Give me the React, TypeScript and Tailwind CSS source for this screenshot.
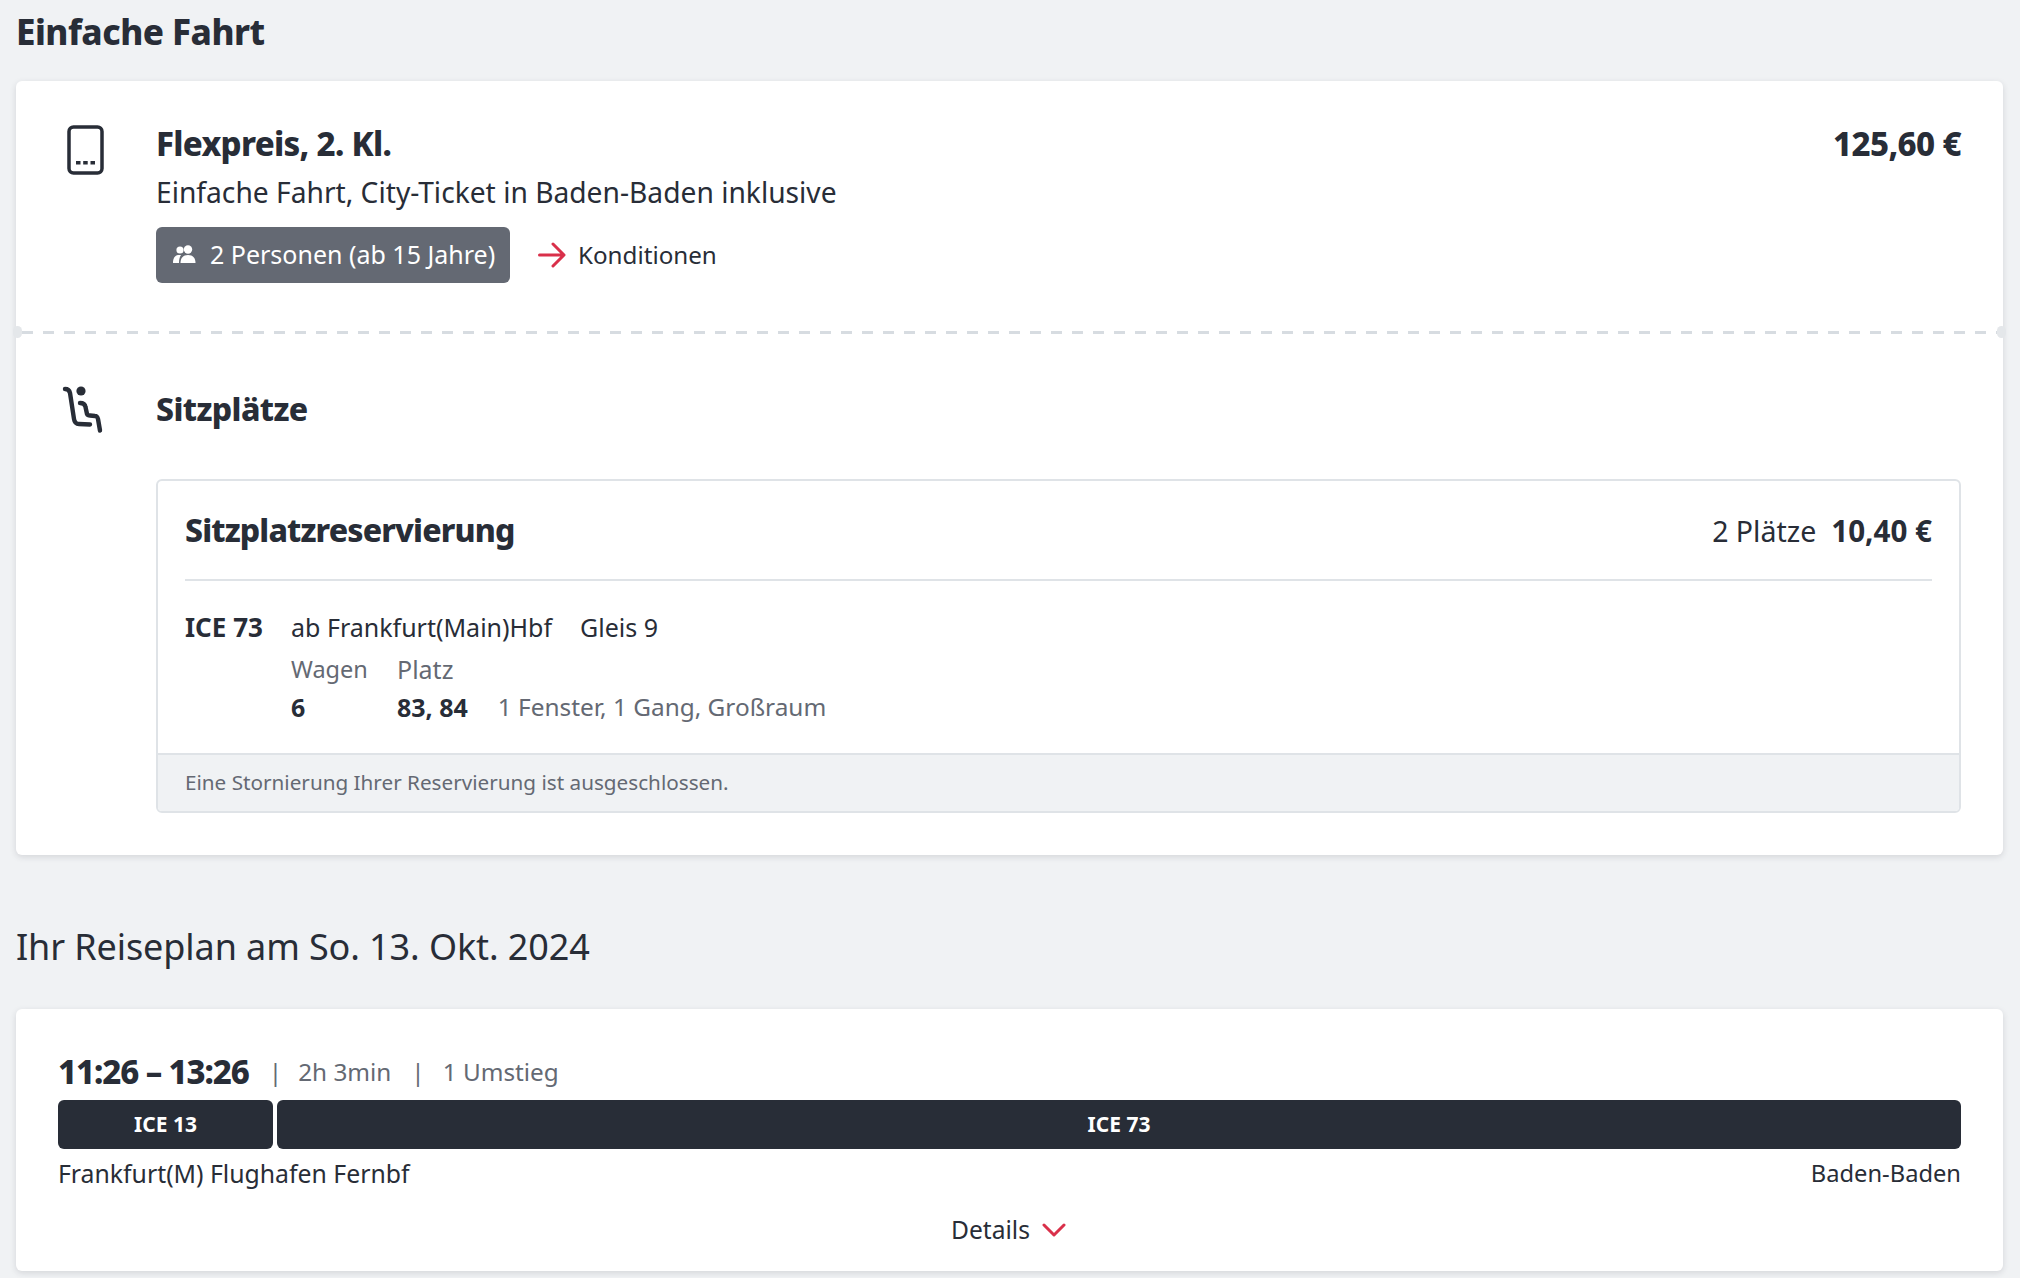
const font = "font-['Noto_Sans','Open_Sans',sans-serif]"

function PhoneIcon() {
  return (
    <svg width="37" height="50" viewBox="0 0 37 50" fill="none" className="text-[#282d37]">
      <rect x="2" y="2" width="33" height="46" rx="4.5" stroke="currentColor" strokeWidth="3.5" />
      <rect x="9" y="36" width="4.5" height="3.5" fill="currentColor" />
      <rect x="16.2" y="36" width="4.5" height="3.5" fill="currentColor" />
      <rect x="23.5" y="36" width="4.5" height="3.5" fill="currentColor" />
    </svg>
  )
}

function SeatIcon() {
  return (
    <svg width="44" height="52" viewBox="0 0 44 52" fill="none" className="text-[#282d37]">
      <circle cx="21" cy="8" r="4.6" fill="currentColor" />
      <path
        d="M5 6 C8 6 9.5 7.5 10 10 L14 36 C14.5 39.5 16 41 19 41 L30 41.5"
        stroke="currentColor"
        strokeWidth="4.4"
        strokeLinecap="round"
      />
      <path
        d="M20 20 C23.5 20 25 21 25.5 24 L27 31 C27.5 32 28 32.5 30 32.5 L35 33 C37 33 37.5 34 38 36 L40 47.5"
        stroke="currentColor"
        strokeWidth="4.4"
        strokeLinecap="round"
        strokeLinejoin="round"
      />
    </svg>
  )
}

function PeopleIcon() {
  return (
    <svg width="24" height="20" viewBox="0 0 24 20" fill="white">
      <circle cx="8" cy="5" r="3.6" />
      <circle cx="16" cy="4.5" r="4.2" />
      <path d="M1 18 C1 13 3 10.5 6 10 L9 10 C7.5 12 7 15 7 18 Z" />
      <path d="M8.5 18 C8.5 13 11 10 16 10 C21 10 23.5 13 23.5 18 Z" />
    </svg>
  )
}

function ArrowIcon() {
  return (
    <svg width="28" height="26" viewBox="0 0 28 26" fill="none" className="text-[#d9304a]">
      <path
        d="M1.5 13 H25 M15 2 L26 13 L15 24"
        stroke="currentColor"
        strokeWidth="3"
        strokeLinecap="round"
        strokeLinejoin="round"
      />
    </svg>
  )
}

export default function App() {
  return (
    <div className={`${font} h-[1278px] overflow-hidden bg-[#f0f2f4] pl-4 pr-[17px] text-[#282d37]`}>
      <h1 className="h-[81px] pt-[9px] text-[35px] leading-[46px] font-extrabold tracking-[-0.5px]">Einfache Fahrt</h1>

      {/* Ticket card */}
      <div className="relative rounded-md bg-white shadow-[0_2px_6px_rgba(40,45,55,0.14)]">
        <div className="flex h-[250px] pt-[44px] pr-[42px]">
          <div className="w-[140px] pl-[51px]">
            <PhoneIcon />
          </div>
          <div className="-mt-[2px] flex-1">
            <div className="flex items-center justify-between">
              <h2 className="text-[33px] leading-[42px] font-extrabold tracking-[-0.7px]">Flexpreis, 2. Kl.</h2>
              <span className="text-[33px] leading-[42px] font-extrabold tracking-[-0.6px]">125,60 €</span>
            </div>
            <p className="mt-[8px] text-[28.2px] leading-[38px]">
              Einfache Fahrt, City-Ticket in Baden-Baden inklusive
            </p>
            <div className="mt-[16px] flex items-center">
              <div className="flex h-[56px] w-[354px] items-center gap-[14px] rounded-md bg-[#646973] pl-[16px] text-[25px] text-white">
                <PeopleIcon />
                <span>2 Personen (ab 15 Jahre)</span>
              </div>
              <div className="ml-[28px] flex items-center gap-[12px] text-[24.2px]">
                <ArrowIcon />
                <span>Konditionen</span>
              </div>
            </div>
          </div>
        </div>

        {/* Perforation */}
        <div className="mx-[6px] h-[3px] bg-[repeating-linear-gradient(90deg,#d7dce1_0,#d7dce1_11px,transparent_11px,transparent_21px)]" />
        <div className="absolute top-[245px] -left-[3px] h-[12px] w-[9px] rounded-full bg-[#e4e7ea]" />
        <div className="absolute top-[245px] -right-[3px] h-[12px] w-[9px] rounded-full bg-[#e4e7ea]" />

        {/* Seats */}
        <div className="pr-[42px] pb-[42px]">
          <div className="flex h-[145px] items-start pt-[49px]">
            <div className="w-[140px] pl-[44px]">
              <SeatIcon />
            </div>
            <h2 className="mt-[5px] text-[32px] leading-[42px] font-extrabold tracking-[-0.6px]">Sitzplätze</h2>
          </div>

          <div className="ml-[140px] overflow-hidden rounded-md border-2 border-[#dfe3e7]">
            <div className="px-[27px]">
              <div className="flex h-[100px] items-center justify-between border-b-2 border-[#dfe3e7]">
                <h3 className="text-[32px] font-extrabold tracking-[-0.85px]">Sitzplatzreservierung</h3>
                <div className="mt-[2px] flex items-center gap-[15px]">
                  <span className="text-[28.5px]">2 Plätze</span>
                  <span className="text-[29.6px] font-bold">10,40 €</span>
                </div>
              </div>
              <div className="flex pt-[27px] pb-[27px] text-[25px] leading-[38px]">
                <span className="w-[106px] text-[26px] font-bold">ICE 73</span>
                <div>
                  <div className="flex gap-[28px]">
                    <span>ab Frankfurt(Main)Hbf</span>
                    <span>Gleis 9</span>
                  </div>
                  <div className="grid grid-cols-[106px_auto_1fr]">
                    <span className="mt-[4px] text-[23.5px] text-[#646973]">Wagen</span>
                    <span className="mt-[4px] text-[#646973]">Platz</span>
                    <span />
                    <span className="font-bold">6</span>
                    <span className="font-bold">83, 84</span>
                    <span className="ml-[30px] text-[24.4px] text-[#646973]">1 Fenster, 1 Gang, Großraum</span>
                  </div>
                </div>
              </div>
            </div>
            <div className="flex h-[58px] items-center border-t-2 border-[#dfe3e7] bg-[#f0f2f4] px-[27px] text-[20.7px] text-[#646973]">
              Eine Stornierung Ihrer Reservierung ist ausgeschlossen.
            </div>
          </div>
        </div>
      </div>

      <h2 className="mt-[67px] mb-[37px] text-[36px] leading-[50px] tracking-[-0.1px]">Ihr Reiseplan am So. 13. Okt. 2024</h2>

      {/* Connection card */}
      <div className="h-[262px] rounded-md bg-white px-[42px] pt-[44px] shadow-[0_2px_6px_rgba(40,45,55,0.14)]">
        <div className="flex h-[38px] items-center">
          <span className="text-[33px] font-extrabold tracking-[-1.1px]">11:26 – 13:26</span>
          <span className="ml-[20px] text-[24.3px] text-[#646973]">|</span>
          <span className="ml-[16px] text-[24.3px] text-[#646973]">2h 3min</span>
          <span className="ml-[20px] text-[24.3px] text-[#646973]">|</span>
          <span className="ml-[18px] text-[24.3px] text-[#646973]">1 Umstieg</span>
        </div>
        <div className="mt-[9px] flex h-[49px] gap-[4px] text-[21px] font-bold text-white">
          <div className="flex w-[215px] items-center justify-center rounded-md bg-[#282d37]">ICE 13</div>
          <div className="flex flex-1 items-center justify-center rounded-md bg-[#282d37]">ICE 73</div>
        </div>
        <div className="mt-[6px] flex justify-between text-[24.8px] leading-[36px]">
          <span>Frankfurt(M) Flughafen Fernbf</span>
          <span className="text-[23.7px]">Baden-Baden</span>
        </div>
        <div className="mt-[21px] flex items-center justify-center gap-[12px] pr-[2px] text-[24.6px] leading-[36px]">
          <span>Details</span>
          <svg width="24" height="14" viewBox="0 0 24 14" fill="none" className="text-[#d9304a]">
            <path d="M2 2 L12 12 L22 2" stroke="currentColor" strokeWidth="3" strokeLinecap="round" strokeLinejoin="round" />
          </svg>
        </div>
      </div>
    </div>
  )
}
